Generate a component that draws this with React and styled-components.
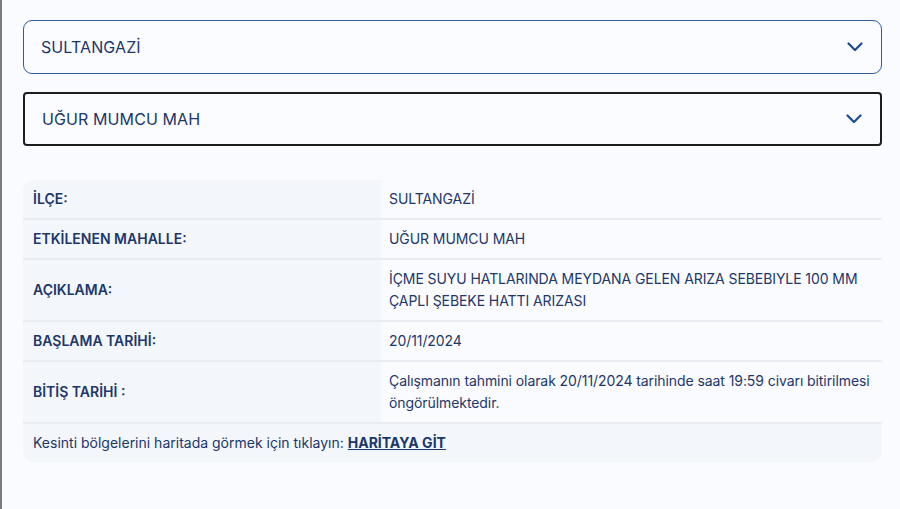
import React from "react";
import styled, { createGlobalStyle } from "styled-components";

const GlobalStyle = createGlobalStyle`
  html, body {
    margin: 0;
    padding: 0;
    background: #fafbfe;
  }
  body {
    font-family: Inter, "Noto Sans", "Liberation Sans", sans-serif;
    color: #1c3769;
  }
`;

const Page = styled.div`
  box-sizing: border-box;
  width: 900px;
  height: 509px;
  border-left: 2px solid #7b7b7b;
  padding: 20px 18px 0 21px;
  display: flex;
  flex-direction: column;
  gap: 18px;
`;

const Select = styled.div`
  box-sizing: border-box;
  height: 54px;
  display: flex;
  align-items: center;
  justify-content: space-between;
  padding: 0 18px 0 17px;
  background: #fbfcff;
  border: ${(p) => (p.focused ? "2px solid #1d1d1d" : "1px solid #2e5aa6")};
  border-radius: ${(p) => (p.focused ? "4px" : "9px")};
  font-size: 16px;
  color: #1c3769;
  letter-spacing: 0.1px;
`;

const Chevron = () => (
  <svg width="16" height="10" viewBox="0 0 16 10" fill="none">
    <path d="M1.5 1.5 L8 8 L14.5 1.5" stroke="#1c4a90" strokeWidth="2.2" strokeLinecap="round" strokeLinejoin="round" />
  </svg>
);

const Table = styled.div`
  margin-top: 16px;
  border-radius: 12px;
  overflow: hidden;
  background: #f3f6fb;
`;

const Row = styled.div`
  display: grid;
  grid-template-columns: 358px 1fr;
  border-bottom: 2px solid #e9edf3;
`;

const Label = styled.div`
  display: flex;
  align-items: center;
  padding: 8px 10px;
  font-size: 14px;
  line-height: 22px;
  font-weight: 600;
  background: #f3f6fb;
`;

const Value = styled.div`
  padding: 8px 2px 8px 8px;
  font-size: 14px;
  line-height: 22px;
  letter-spacing: -0.08px;
  background: #fafbfe;
  display: flex;
  align-items: center;
`;

const Footer = styled.div`
  padding: 8px 10px;
  font-size: 14px;
  line-height: 22px;
  background: #f3f6fb;

  a {
    color: #1c3769;
    font-weight: 700;
    text-decoration: underline;
  }
`;

const rows = [
  ["İLÇE:", "SULTANGAZİ"],
  ["ETKİLENEN MAHALLE:", "UĞUR MUMCU MAH"],
  ["AÇIKLAMA:", "İÇME SUYU HATLARINDA MEYDANA GELEN ARIZA SEBEBIYLE 100 MM ÇAPLI ŞEBEKE HATTI ARIZASI"],
  ["BAŞLAMA TARİHİ:", "20/11/2024"],
  ["BİTİŞ TARİHİ :", "Çalışmanın tahmini olarak 20/11/2024 tarihinde saat 19:59 civarı bitirilmesi öngörülmektedir."],
];

export default function App() {
  return (
    <>
      <GlobalStyle />
      <Page>
        <Select>
          SULTANGAZİ
          <Chevron />
        </Select>
        <Select focused>
          UĞUR MUMCU MAH
          <Chevron />
        </Select>
        <Table>
          {rows.map(([k, v]) => (
            <Row key={k}>
              <Label>{k}</Label>
              <Value>{v}</Value>
            </Row>
          ))}
          <Footer>
            Kesinti bölgelerini haritada görmek için tıklayın: <a href="#">HARİTAYA GİT</a>
          </Footer>
        </Table>
      </Page>
    </>
  );
}
